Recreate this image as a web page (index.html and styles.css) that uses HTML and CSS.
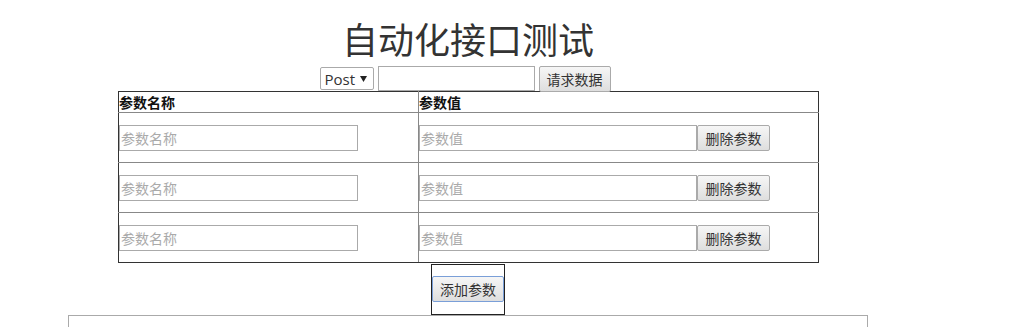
FILE: index.html
```html
<!DOCTYPE html>
<html lang="zh-CN">
<head>
    <meta charset="UTF-8">
    <meta name="viewport" content="width=device-width, initial-scale=1.0">
    <title>自动化接口测试</title>
    <link rel="stylesheet" href="styles.css">
</head>
<body>

<div class="page">
    <h1 class="title">自动化接口测试</h1>

    <div class="request">
        <div class="method">Post <svg width="7" height="6" viewBox="0 0 7 6"><path d="M0 0H7L3.5 6Z" fill="#222"/></svg></div>
        <input class="url" type="text">
        <button class="button">请求数据</button>
    </div>

    <table class="params">
        <tr>
            <th class="col-name">参数名称</th>
            <th>参数值</th>
        </tr>
        <tr>
            <td><input class="name-input" type="text" placeholder="参数名称"></td>
            <td><div class="value-cell"><input class="value-input" type="text" placeholder="参数值"><button class="button">删除参数</button></div></td>
        </tr>
        <tr>
            <td><input class="name-input" type="text" placeholder="参数名称"></td>
            <td><div class="value-cell"><input class="value-input" type="text" placeholder="参数值"><button class="button">删除参数</button></div></td>
        </tr>
        <tr>
            <td><input class="name-input" type="text" placeholder="参数名称"></td>
            <td><div class="value-cell"><input class="value-input" type="text" placeholder="参数值"><button class="button">删除参数</button></div></td>
        </tr>
    </table>

    <div class="add-box">
        <button class="button add">添加参数</button>
    </div>

    <div class="result"></div>
</div>

</body>
</html>
```

FILE: styles.css
```css
body {
    margin: 8px;
    font-family: "Noto Sans CJK SC", "Noto Sans", sans-serif;
    color: #222;
}
.page {
    width: 800px;
    margin-left: 60px;
}
.title {
    margin: 6px 0 4px;
    font-size: 36px;
    font-weight: normal;
    line-height: 48px;
    text-align: center;
    color: #333;
}
.request {
    display: flex;
    justify-content: center;
    align-items: center;
    gap: 4px;
    height: 25px;
    margin-left: -6px;
}
.method {
    display: flex;
    align-items: center;
    gap: 5px;
    box-sizing: border-box;
    width: 54px;
    height: 23px;
    padding-left: 4px;
    border: 1px solid #aaa;
    border-radius: 2px;
    font-family: "Open Sans", "Noto Sans", sans-serif;
    font-size: 15px;
    color: #333;
}
.url {
    box-sizing: border-box;
    width: 157px;
    height: 25px;
    margin: 0;
    border: 1px solid #aaa;
}
.button {
    box-sizing: border-box;
    height: 26px;
    margin: 0;
    padding: 0 7px;
    border: 1px solid #aaa;
    border-radius: 2px;
    background: linear-gradient(#f6f6f6, #dedede);
    font-family: "Noto Sans CJK SC", sans-serif;
    font-size: 14px;
    color: #333;
}
.params {
    width: 701px;
    margin: 0 auto 0 50px;
    border-collapse: collapse;
    border: 1px solid #333;
}
.params th {
    height: 20px;
    padding: 0;
    border: 1px solid #888;
    border-top-color: #333;
    text-align: left;
    font-size: 14px;
    font-weight: bold;
    line-height: 18px;
    color: #111;
}
.params .col-name {
    width: 299px;
}
.params td {
    height: 49px;
    padding: 0;
    border: 1px solid #888;
    vertical-align: middle;
}
.params tr:last-child td {
    border-bottom-color: #333;
}
.params tr > :first-child {
    border-left-color: #333;
}
.params tr > :last-child {
    border-right-color: #333;
}
.name-input,
.value-input {
    box-sizing: border-box;
    height: 26px;
    margin: 0;
    padding: 0 1px;
    border: 1px solid #aaa;
    font-family: "Noto Sans CJK SC", sans-serif;
    font-size: 14px;
    color: #333;
}
.name-input::placeholder,
.value-input::placeholder {
    color: #aaa;
}
.name-input {
    width: 239px;
}
.value-cell {
    display: flex;
    align-items: center;
}
.value-input {
    width: 278px;
}
.value-cell .button {
    width: 73px;
}
.add-box {
    box-sizing: border-box;
    width: 74px;
    height: 51px;
    margin: 1px auto 0;
    padding-top: 11px;
    border: 1px solid #222;
}
.add {
    width: 72px;
    border-color: #7a9fd8;
}
.result {
    box-sizing: border-box;
    height: 200px;
    border: 1px solid #aaa;
}
```
